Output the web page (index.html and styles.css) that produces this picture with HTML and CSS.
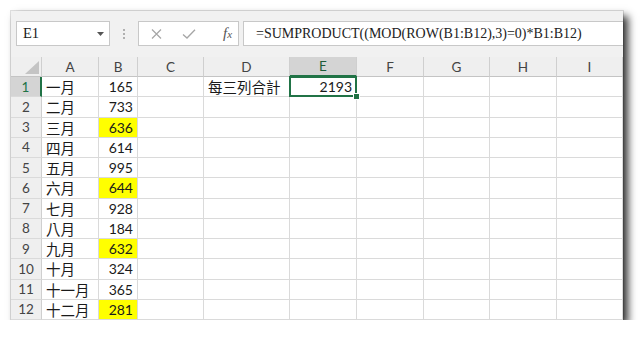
FILE: index.html
```html
<!DOCTYPE html>
<html lang="zh-Hant">
<head>
    <meta charset="UTF-8">
    <title>Excel - SUMPRODUCT</title>
    <link rel="stylesheet" href="styles.css">
</head>
<body>
    <div class="window">
        <div class="toolbar">
            <div class="namebox">
                <span>E1</span>
                <svg class="drop" width="7" height="4" viewBox="0 0 7 4"><polygon points="0,0 7,0 3.5,4" fill="#555"/></svg>
            </div>
            <div class="dots"><i></i><i></i><i></i></div>
            <div class="fnbox">
                <svg width="11" height="10" viewBox="0 0 11 10"><path d="M1 0.5 L10 9.5 M10 0.5 L1 9.5" stroke="#a6a6a6" stroke-width="1.2" fill="none"/></svg>
                <svg width="14" height="10" viewBox="0 0 14 10"><path d="M1 5.5 L5 9 L13 0.8" stroke="#a6a6a6" stroke-width="1.3" fill="none"/></svg>
                <span class="fx">f<sub>x</sub></span>
            </div>
            <div class="formula">=SUMPRODUCT((MOD(ROW(B1:B12),3)=0)*B1:B12)</div>
        </div>
        <div class="sheet">
            <!-- 欄標題 -->
            <div class="corner"><svg width="14" height="13" viewBox="0 0 14 13"><polygon points="14,0 14,13 0,13" fill="#c4c4c4"/></svg></div>
            <div class="ch">A</div><div class="ch">B</div><div class="ch">C</div><div class="ch">D</div>
            <div class="ch active">E</div><div class="ch">F</div><div class="ch">G</div><div class="ch">H</div><div class="ch">I</div>

            <div class="rh active">1</div><div class="cell">一月</div><div class="cell num">165</div><div class="cell"></div>
            <div class="cell">每三列合計</div><div class="cell num sel">2193<b class="handle"></b></div><div class="cell"></div><div class="cell"></div><div class="cell"></div><div class="cell"></div>

            <div class="rh">2</div><div class="cell">二月</div><div class="cell num">733</div><div class="cell"></div>
            <div class="cell"></div><div class="cell"></div><div class="cell"></div><div class="cell"></div><div class="cell"></div><div class="cell"></div>

            <div class="rh">3</div><div class="cell">三月</div><div class="cell num hl">636</div><div class="cell"></div>
            <div class="cell"></div><div class="cell"></div><div class="cell"></div><div class="cell"></div><div class="cell"></div><div class="cell"></div>

            <div class="rh">4</div><div class="cell">四月</div><div class="cell num">614</div><div class="cell"></div>
            <div class="cell"></div><div class="cell"></div><div class="cell"></div><div class="cell"></div><div class="cell"></div><div class="cell"></div>

            <div class="rh">5</div><div class="cell">五月</div><div class="cell num">995</div><div class="cell"></div>
            <div class="cell"></div><div class="cell"></div><div class="cell"></div><div class="cell"></div><div class="cell"></div><div class="cell"></div>

            <div class="rh">6</div><div class="cell">六月</div><div class="cell num hl">644</div><div class="cell"></div>
            <div class="cell"></div><div class="cell"></div><div class="cell"></div><div class="cell"></div><div class="cell"></div><div class="cell"></div>

            <div class="rh">7</div><div class="cell">七月</div><div class="cell num">928</div><div class="cell"></div>
            <div class="cell"></div><div class="cell"></div><div class="cell"></div><div class="cell"></div><div class="cell"></div><div class="cell"></div>

            <div class="rh">8</div><div class="cell">八月</div><div class="cell num">184</div><div class="cell"></div>
            <div class="cell"></div><div class="cell"></div><div class="cell"></div><div class="cell"></div><div class="cell"></div><div class="cell"></div>

            <div class="rh">9</div><div class="cell">九月</div><div class="cell num hl">632</div><div class="cell"></div>
            <div class="cell"></div><div class="cell"></div><div class="cell"></div><div class="cell"></div><div class="cell"></div><div class="cell"></div>

            <div class="rh">10</div><div class="cell">十月</div><div class="cell num">324</div><div class="cell"></div>
            <div class="cell"></div><div class="cell"></div><div class="cell"></div><div class="cell"></div><div class="cell"></div><div class="cell"></div>

            <div class="rh">11</div><div class="cell">十一月</div><div class="cell num">365</div><div class="cell"></div>
            <div class="cell"></div><div class="cell"></div><div class="cell"></div><div class="cell"></div><div class="cell"></div><div class="cell"></div>

            <div class="rh">12</div><div class="cell">十二月</div><div class="cell num hl">281</div><div class="cell"></div>
            <div class="cell"></div><div class="cell"></div><div class="cell"></div><div class="cell"></div><div class="cell"></div><div class="cell"></div>
        </div>
    </div>
</body>
</html>
```

FILE: styles.css
```css
:root {
    --toolbar: #f1f1f1;
    --header: #efefef;
    --header-active: #d4d4d4;
    --header-line: #cfcfcf;
    --grid: #dadada;
    --green: #217346;
    --text: #1a1a1a;
    --muted: #444;
}
* {
    box-sizing: border-box;
}
body {
    margin: 0;
    background: #fff;
    font-family: "Lato", "Noto Sans CJK TC", sans-serif;
    color: var(--text);
}
.window {
    margin: 11px 0 0 11px;
    width: 612px;
    height: 309px;
    overflow: hidden;
    background: #fff;
    box-shadow: 0 0 0 1px rgba(0, 0, 0, 0.12), 5px 5px 8px rgba(0, 0, 0, 0.8);
}
/* barra de fórmulas */
.toolbar {
    height: 46px;
    background: var(--toolbar);
    display: flex;
    align-items: flex-start;
    padding: 10px 0 0 5px;
}
.namebox {
    width: 94px;
    height: 25px;
    background: #fff;
    border: 1px solid #c8c8c8;
    display: flex;
    align-items: center;
    justify-content: space-between;
    padding: 0 5px 0 6px;
    font-family: "Liberation Serif", serif;
    font-size: 14.5px;
}
.dots {
    width: 2px;
    margin: 8px 13px 0 13px;
    display: flex;
    flex-direction: column;
    gap: 2px;
}
.dots i {
    width: 2px;
    height: 2px;
    background: #b0b0b0;
}
.fnbox {
    width: 101px;
    height: 25px;
    background: #fff;
    border: 1px solid #c8c8c8;
    display: flex;
    align-items: center;
    padding: 0 0 0 12px;
    gap: 20px;
}
.fx {
    font-family: "Liberation Serif", serif;
    font-style: italic;
    font-size: 15px;
    color: #555;
    margin-left: 7px;
}
.fx sub {
    font-size: 11px;
    vertical-align: 0;
}
.formula {
    flex: 1;
    height: 25px;
    margin: 0 -2px 0 4px;
    background: #fff;
    border: 1px solid #c8c8c8;
    padding: 0 0 0 12px;
    display: flex;
    align-items: center;
    font-family: "Liberation Serif", serif;
    font-size: 14px;
    color: #222;
}
/* planilha */
.sheet {
    display: grid;
    grid-template-columns: 31px 57px 39px 66px 86px 67px 67px 66px 67px 66px;
    grid-template-rows: 20px;
    grid-auto-rows: 20.25px;
}
.corner {
    background: var(--header);
    border-right: 1px solid var(--header-line);
    border-bottom: 1px solid #c4c4c4;
    display: flex;
    align-items: flex-end;
    justify-content: flex-end;
    padding: 0 2px 2px 0;
}
.ch {
    background: var(--header);
    border-right: 1px solid var(--header-line);
    border-bottom: 1px solid #c4c4c4;
    display: flex;
    align-items: center;
    justify-content: center;
    font-size: 13.5px;
    color: var(--muted);
}
.ch.active {
    background: var(--header-active);
    color: #1e5c3a;
    border-bottom: 2px solid var(--green);
}
.rh {
    background: var(--header);
    border-right: 1px solid var(--header-line);
    border-bottom: 1px solid var(--grid);
    display: flex;
    align-items: center;
    justify-content: center;
    font-size: 13.5px;
    color: var(--muted);
}
.rh.active {
    background: var(--header-active);
    color: var(--green);
    border-right: 2px solid var(--green);
}
.cell {
    border-right: 1px solid var(--grid);
    border-bottom: 1px solid var(--grid);
    display: flex;
    align-items: center;
    padding: 0 4px;
    font-size: 14.5px;
    white-space: nowrap;
}
.num {
    justify-content: flex-end;
    font-size: 14px;
}
.hl {
    background: #ffff00;
}
.sel {
    position: relative;
}
.sel::after {
    content: "";
    position: absolute;
    left: -1px;
    top: -1px;
    right: -1px;
    bottom: -1px;
    border: 2px solid var(--green);
}
.handle {
    position: absolute;
    right: -4px;
    bottom: -4px;
    width: 7px;
    height: 7px;
    background: var(--green);
    border: 1px solid #fff;
    z-index: 1;
}
```
